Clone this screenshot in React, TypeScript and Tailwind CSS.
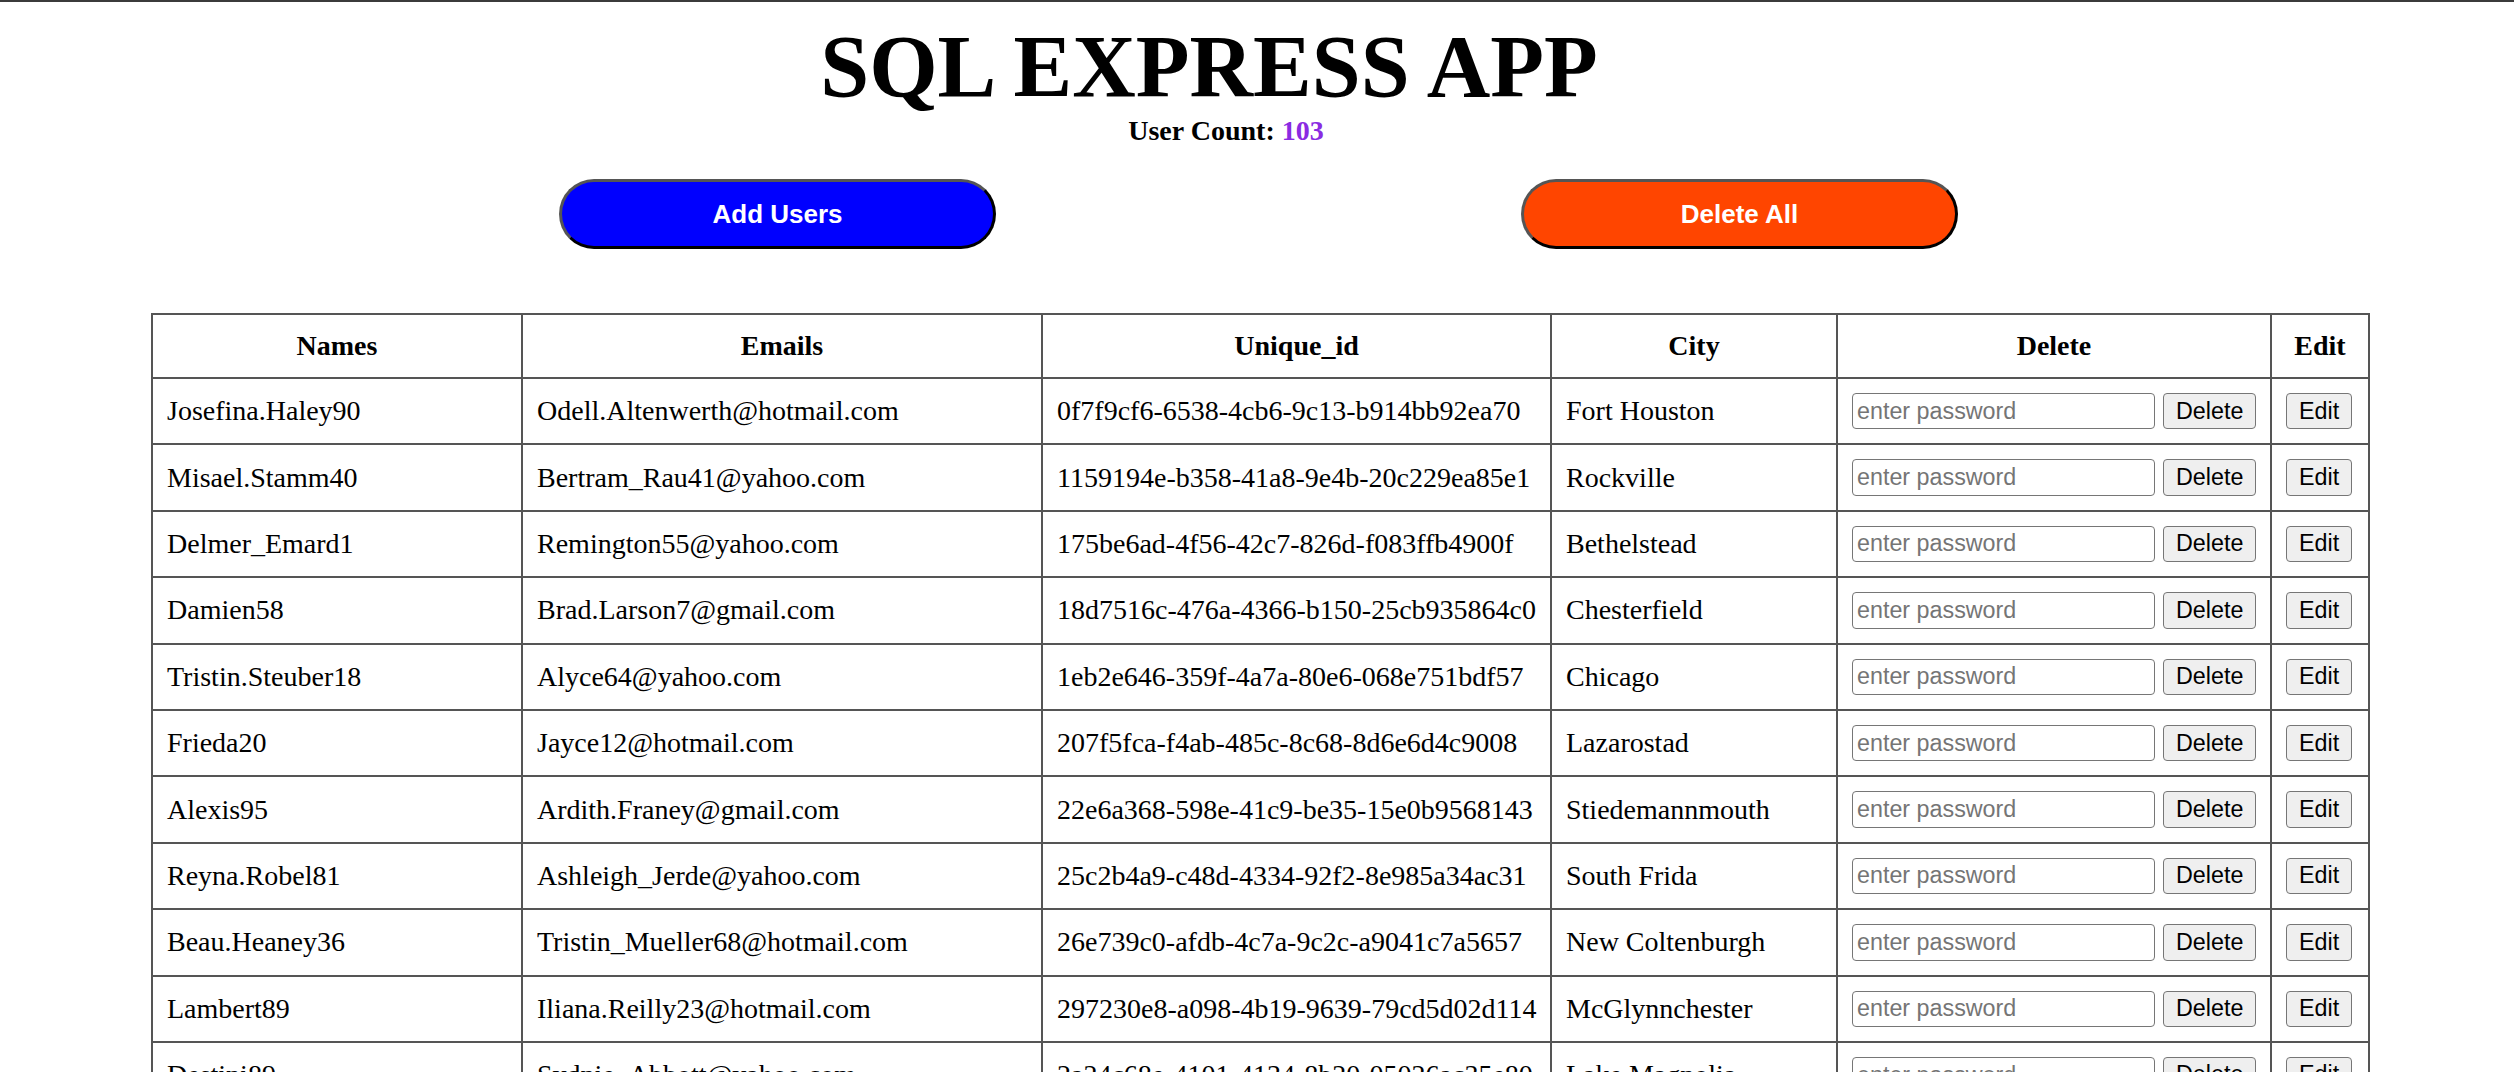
import React from 'react';

type User = {
  name: string;
  email: string;
  id: string;
  city: string;
};

const users: User[] = [
  { name: 'Josefina.Haley90', email: 'Odell.Altenwerth@hotmail.com', id: '0f7f9cf6-6538-4cb6-9c13-b914bb92ea70', city: 'Fort Houston' },
  { name: 'Misael.Stamm40', email: 'Bertram_Rau41@yahoo.com', id: '1159194e-b358-41a8-9e4b-20c229ea85e1', city: 'Rockville' },
  { name: 'Delmer_Emard1', email: 'Remington55@yahoo.com', id: '175be6ad-4f56-42c7-826d-f083ffb4900f', city: 'Bethelstead' },
  { name: 'Damien58', email: 'Brad.Larson7@gmail.com', id: '18d7516c-476a-4366-b150-25cb935864c0', city: 'Chesterfield' },
  { name: 'Tristin.Steuber18', email: 'Alyce64@yahoo.com', id: '1eb2e646-359f-4a7a-80e6-068e751bdf57', city: 'Chicago' },
  { name: 'Frieda20', email: 'Jayce12@hotmail.com', id: '207f5fca-f4ab-485c-8c68-8d6e6d4c9008', city: 'Lazarostad' },
  { name: 'Alexis95', email: 'Ardith.Franey@gmail.com', id: '22e6a368-598e-41c9-be35-15e0b9568143', city: 'Stiedemannmouth' },
  { name: 'Reyna.Robel81', email: 'Ashleigh_Jerde@yahoo.com', id: '25c2b4a9-c48d-4334-92f2-8e985a34ac31', city: 'South Frida' },
  { name: 'Beau.Heaney36', email: 'Tristin_Mueller68@hotmail.com', id: '26e739c0-afdb-4c7a-9c2c-a9041c7a5657', city: 'New Coltenburgh' },
  { name: 'Lambert89', email: 'Iliana.Reilly23@hotmail.com', id: '297230e8-a098-4b19-9639-79cd5d02d114', city: 'McGlynnchester' },
  { name: 'Destini89', email: 'Sydnie_Abbott@yahoo.com', id: '2a24c68e-4101-4134-8b20-05026ac35e80', city: 'Lake Magnolia' },
  { name: 'Kailey.Lind12', email: 'Ross.Harber@gmail.com', id: '2b91fe0a-7c2e-4d51-a0c4-3f1e9b7d6a21', city: 'West Jaden' },
];

const cell = 'border-2 border-[#555] px-[14px] py-[14px] text-left font-normal whitespace-nowrap';
const head = 'border-2 border-[#555] px-[14px] py-[15px] text-center font-bold';

const UserRow = ({ user }: { user: User }) => (
  <tr>
    <td className={cell}>{user.name}</td>
    <td className={cell}>{user.email}</td>
    <td className={cell}>{user.id}</td>
    <td className={cell}>{user.city}</td>
    <td className={cell}>
      <div className="flex items-center gap-[8px] font-['Liberation_Sans',Arial,sans-serif] text-[23.3px]">
        <input
          type="password"
          placeholder="enter password"
          className="w-[303px] h-[36.4px] border border-[#767676] rounded-[4px] px-[4px] bg-white placeholder:text-[#757575] outline-none"
        />
        <button className="h-[36.4px] px-[12px] border border-[#767676] rounded-[4px] bg-[#efefef] text-black leading-none">
          Delete
        </button>
      </div>
    </td>
    <td className={cell}>
      <button className="h-[36.4px] px-[12px] border border-[#767676] rounded-[4px] bg-[#efefef] text-black leading-none font-['Liberation_Sans',Arial,sans-serif] text-[23.3px]">
        Edit
      </button>
    </td>
  </tr>
);

const App = () => {
  return (
    <div className="h-[1072px] overflow-hidden bg-white text-black font-['Liberation_Serif','Times_New_Roman',serif]">
      <div className="h-[2px] bg-[#3b3b3b]"></div>

      <h1 className="mt-[21px] text-center text-[88px] leading-[88px] font-bold pr-[96px]">SQL EXPRESS APP</h1>
      <p className="mt-[4px] text-center text-[28px] leading-[32px] font-bold pr-[62px]">
        User Count: <span className="text-[#8a2be2]">103</span>
      </p>

      <div className="mt-[32px] flex justify-center gap-[525px] pl-[3px] font-['Liberation_Sans',Arial,sans-serif]">
        <button className="w-[437px] h-[70px] rounded-full bg-[#0000ff] text-white text-[26px] font-bold border-[3px] border-t-[#555] border-l-[#555] border-b-black border-r-black">
          Add Users
        </button>
        <button className="w-[437px] h-[70px] rounded-full bg-[#ff4500] text-white text-[26px] font-bold border-[3px] border-t-[#555] border-l-[#555] border-b-black border-r-black">
          Delete All
        </button>
      </div>

      <table className="mt-[64px] ml-[151px] w-[2217px] table-fixed border-collapse text-[28px] leading-[32px]">
        <colgroup>
          <col className="w-[370px]" />
          <col className="w-[520px]" />
          <col className="w-[509px]" />
          <col className="w-[286px]" />
          <col className="w-[434px]" />
          <col className="w-[98px]" />
        </colgroup>
        <thead>
          <tr>
            <th className={head}>Names</th>
            <th className={head}>Emails</th>
            <th className={head}>Unique_id</th>
            <th className={head}>City</th>
            <th className={head}>Delete</th>
            <th className={head}>Edit</th>
          </tr>
        </thead>
        <tbody>
          {users.map((u) => (
            <UserRow key={u.id} user={u} />
          ))}
        </tbody>
      </table>
    </div>
  );
};

export default App;
